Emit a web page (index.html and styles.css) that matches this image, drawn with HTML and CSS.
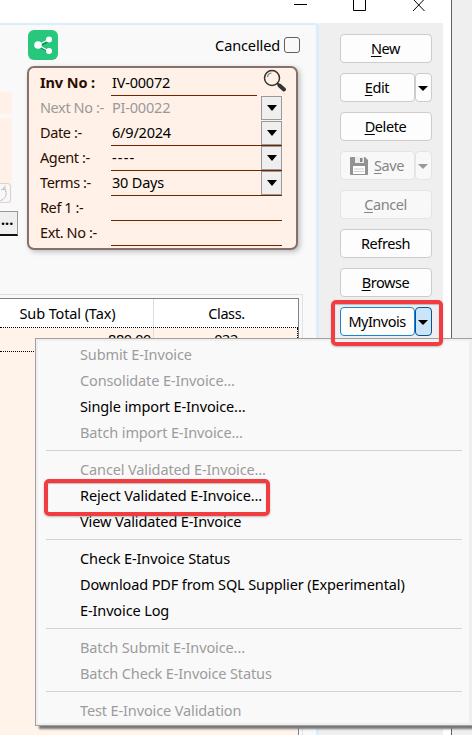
FILE: index.html
```html
<!DOCTYPE html>
<html lang="en">
<head>
<meta charset="utf-8">
<title>Invoice</title>
<link rel="stylesheet" href="styles.css">
</head>
<body>
<div class="window">
  <header class="titlebar">
    <svg width="160" height="23" viewBox="0 0 160 23" fill="none" stroke="#000"><path d="M2 4.5h13M61.500-2v12.500h12V-2M121-1l11.500 12M132.500-1l-11.500 12"/></svg>
  </header>
  <div class="content">
    <main class="main">
      <section class="top">
        <div class="left">
          <div class="peach short"></div>
          <div class="peach tall"><div class="reload"><svg width="18" height="18" viewBox="0 0 18 18" fill="none" stroke="#c5c2c0"><path d="M13 3.500A7 7 0 1 1 5 15.500M16 8a7 7 0 0 0-3-4.500M11 5.500h4v-4"/></svg></div></div>
          <div class="more">...</div>
        </div>
        <div class="details">
          <div class="tools">
            <div class="share"><svg width="30" height="30" viewBox="0 0 30 30"><path d="M21 9.500 10 15l11 6" fill="none" stroke="#128c50" stroke-width="2" transform="translate(.7 1)"/><path d="M21 9.500 10 15l11 6" fill="none" stroke="#fff" stroke-width="1.200"/><g fill="#fff"><circle cx="21" cy="9.500" r="3"/><circle cx="10" cy="15" r="3.800"/><circle cx="21" cy="21" r="3"/></g></svg></div>
            <div class="cancelled"><span class="t wide">Cancelled</span><i></i></div>
          </div>
          <div class="card">
            <div class="row"><b class="t key">Inv No :</b><div class="val short-line t">IV-00072</div><svg class="search" width="26" height="25" viewBox="0 0 26 25" fill="none"><circle cx="10" cy="9" r="7.500" stroke="#333" stroke-width="1.500"/><path d="M5.500 8a4.500 4.500 0 0 1 4-4" stroke="#777" stroke-width="1.200"/><path d="m15 14 3 3" stroke="#333" stroke-width="2"/><path d="m17.500 16.500 4.500 4" stroke="#333" stroke-width="4" stroke-linecap="round"/></svg></div>
            <div class="row muted"><span class="t key">Next No :-</span><div class="val no-line t">PI-00022</div><div class="drop"></div></div>
            <div class="row"><span class="t key">Date :-</span><div class="val t">6/9/2024</div><div class="drop"></div></div>
            <div class="row"><span class="t key">Agent :-</span><div class="val t dashes">----</div><div class="drop"></div></div>
            <div class="row"><span class="t key">Terms :-</span><div class="val t">30 Days</div><div class="drop"></div></div>
            <div class="row"><span class="t key">Ref 1 :-</span><div class="val"></div></div>
            <div class="row"><span class="t key">Ext. No :-</span><div class="val"></div></div>
          </div>
        </div>
      </section>
      <section class="grid-outer"><div class="grid">
        <div class="grid-head"><span class="t wide">Sub Total (Tax)</span><span class="t">Class.</span></div>
        <div class="grid-row"><span class="t">880.00</span><span class="t">022</span></div>
      </div></section>
    </main>
    <aside class="side">
      <div class="btn"><span class="t"><u>N</u>ew</span></div>
      <div class="split"><div class="btn"><span class="t"><u>E</u>dit</span></div><div class="btn arrow"></div></div>
      <div class="btn"><span class="t"><u>D</u>elete</span></div>
      <div class="split off"><div class="btn"><svg width="18" height="18" viewBox="0 0 18 18"><path d="M0 1q0-1 1-1h14l3 3v14q0 1-1 1H1q-1 0-1-1z" fill="#929292"/><path d="M5 0h9v6H5z" fill="#eee"/><path d="M10 1h2.500v4H10z" fill="#888"/><path d="M3 9h12v8H3z" fill="#fff"/><path d="M4 12h10M4 14.500h10" stroke="#ccc"/></svg><span class="t"><u>S</u>ave</span></div><div class="btn arrow"></div></div>
      <div class="btn off"><span class="t"><u>C</u>ancel</span></div>
      <div class="btn"><span class="t">Refresh</span></div>
      <div class="btn"><span class="t"><u>B</u>rowse</span></div>
      <div class="split active"><div class="btn"><span class="t">MyInvois</span></div><div class="btn arrow"></div></div>
    </aside>
  </div>
</div>
<nav class="menu">
  <div class="item off"><span class="t">Submit E-Invoice</span></div>
  <div class="item off"><span class="t">Consolidate E-Invoice...</span></div>
  <div class="item"><span class="t">Single import E-Invoice...</span></div>
  <div class="item off"><span class="t">Batch import E-Invoice...</span></div>
  <hr>
  <div class="item off"><span class="t">Cancel Validated E-Invoice...</span></div>
  <div class="item"><span class="t">Reject Validated E-Invoice...</span></div>
  <div class="item"><span class="t">View Validated E-Invoice</span></div>
  <hr>
  <div class="item"><span class="t">Check E-Invoice Status</span></div>
  <div class="item"><span class="t">Download PDF from SQL Supplier (Experimental)</span></div>
  <div class="item"><span class="t">E-Invoice Log</span></div>
  <hr>
  <div class="item off"><span class="t">Batch Submit E-Invoice...</span></div>
  <div class="item off"><span class="t">Batch Check E-Invoice Status</span></div>
  <hr>
  <div class="item off"><span class="t">Test E-Invoice Validation</span></div>
</nav>
<div class="mark mark-button"></div>
<div class="mark mark-item"></div>
</body>
</html>
```
FILE: styles.css
```css
* { box-sizing: border-box; }
body { margin: 0; width: 472px; height: 735px; overflow: hidden; position: relative; background: #efefef; font: 14.5px/20px "Noto Sans", "Open Sans", sans-serif; color: #000; }
.t { letter-spacing: -.4px; white-space: nowrap; }
.t.wide, .menu .t { letter-spacing: -.12px; }
.window { width: 452px; height: 735px; background: #fff; border-right: 1px solid #606060; }
.titlebar { height: 23px; padding-left: 292px; overflow: hidden; }
.titlebar svg { display: block; }
.content { display: flex; width: 443px; height: 712px; }
.main { width: 319px; background: #f9f9f9; border-top: 2px solid #d9edfb; border-right: 3px solid #d9edfb; border-top-right-radius: 3px; }
.top { display: flex; height: 269px; }
.left { width: 27px; padding-top: 67px; }
.peach { width: 12px; background: #fff1e7; }
.short { height: 22px; }
.tall { height: 85px; margin-top: 4px; padding-top: 65px; }
.reload { width: 11px; height: 20px; border: 1px solid #d5d5d5; border-left: 0; border-radius: 0 4px 4px 0; background: #f8f8f8; overflow: hidden; display: flex; justify-content: flex-end; }
.reload svg { flex: none; margin-right: 2px; }
.more { width: 18px; height: 25px; margin-top: 8px; background: #efefef; border: 1px solid #999; border-width: 1px 1px 2px 0; border-bottom-color: #111; font-weight: bold; line-height: 14px; padding-left: 1px; }
.details { width: 271px; padding-top: 5px; }
.tools { display: flex; justify-content: space-between; height: 36px; padding-left: 1px; }
.share { width: 30px; height: 30px; border-radius: 6px; background: #27c77d; }
.cancelled { display: flex; height: 30px; align-items: center; gap: 4px; margin-right: -2px; }
.cancelled i { width: 16px; height: 16px; border: 1px solid #606060; border-radius: 3px; }
.card { width: 271px; height: 184px; padding: 3px 0 0 11px; border: 2px solid #85716a; border-radius: 7px; background: #fff1e8; box-shadow: 2px 2px 5px #8888; color: #2b0d00; }
.row { display: flex; height: 25px; }
.key { width: 71px; line-height: 22px; }
b.key { letter-spacing: -.1px; }
.val { width: 171px; height: 25px; padding-left: 1px; border-bottom: 1px solid #702500; line-height: 22px; color: #000; }
.val.t { letter-spacing: -.2px; }
.short-line { width: 146px; }
.no-line { border: 0; }
.muted, .muted .val { color: #999; }
.val.dashes { letter-spacing: 1.2px; }
.search { margin: -2px 0 0 5px; flex: none; }
.drop { width: 21px; height: 24px; margin-left: -21px; border: 1px solid #999; background: #efefef; flex: none; }
.drop, .arrow { display: flex; align-items: center; justify-content: center; }
.drop::after, .arrow::after { content: ""; border: solid transparent; border-width: 6px 5.5px 0; border-top-color: #000; }
.grid-outer { width: 303px; height: 441px; padding: 3px 3px 0 0; border-top: 1px solid #e2e2e2; border-right: 1px solid #e2e2e2; }
.grid { height: 438px; border-top: 1px solid #7c8490; border-right: 1px solid #7c8490; background: #fff3ea; }
.grid-head { display: grid; grid-template-columns: 154px 145px; height: 29px; background: #fff; border-bottom: 1px dotted #000; line-height: 28px; text-align: center; }
.grid-head span:first-child { border-right: 1px solid #ddd; padding-right: 18px; }
.grid-row { display: grid; grid-template-columns: 154px 144px; width: 298px; height: 24px; border: dotted #000; border-width: 0 1px 1px 0; text-align: center; line-height: 23px; }
.grid-row span:first-child { text-align: right; padding-right: 2px; border-right: 1px solid #ddd; }
.side { width: 124px; padding: 11px 11px 0 21px; background: #efefef; display: flex; flex-direction: column; gap: 10px; }
.btn { height: 29px; border: 1px solid #ccc; border-radius: 4px; background: #fdfdfd; display: flex; align-items: center; justify-content: center; gap: 6px; }
.btn .t { padding: 0 1px 2px 0; }
.split { display: flex; }
.split .btn:first-child { width: 75px; }
.split .arrow { width: 17px; padding: 1px 1px 0 0; }
.arrow::after { border-width: 5px 5px 0; }
.off .btn, .btn.off { background: #f8f8f8; border-color: #e4e4e4; color: #858585; }
.off .arrow::after { border-top-color: #999; }
.active .btn { border-color: #1883d7; }
.active .btn .t { letter-spacing: -.5px; }
.active .arrow { background: #cce4f7; border-color: #005499; }
u { text-underline-offset: 2px; text-decoration-thickness: 1px; }
.menu { position: absolute; left: 35px; top: 338px; width: 440px; height: 388px; padding: 2px 0 0 8px; border: 1px solid #a0a0a0; background: #f9f9f9; box-shadow: inset 2px 2px #efefef, inset -5px -2px #efefef, 4px 3px 2px #777; }
.item { height: 26px; padding: 3px 0 3px 36px; }
.item.off { color: #9c9c9c; }
.menu hr { width: 416px; height: 1px; margin: 5px 0 5px 2px; border: 0; background: #d2d2d2; }
.mark { position: absolute; border: 4px solid #f23d40; border-radius: 5px; box-shadow: 0 1px 2px #8888, inset 0 1px 1px #8888; }
.mark-button { left: 331px; top: 300px; width: 112px; height: 46px; }
.mark-item { left: 44px; top: 479px; width: 226px; height: 37px; }
```
